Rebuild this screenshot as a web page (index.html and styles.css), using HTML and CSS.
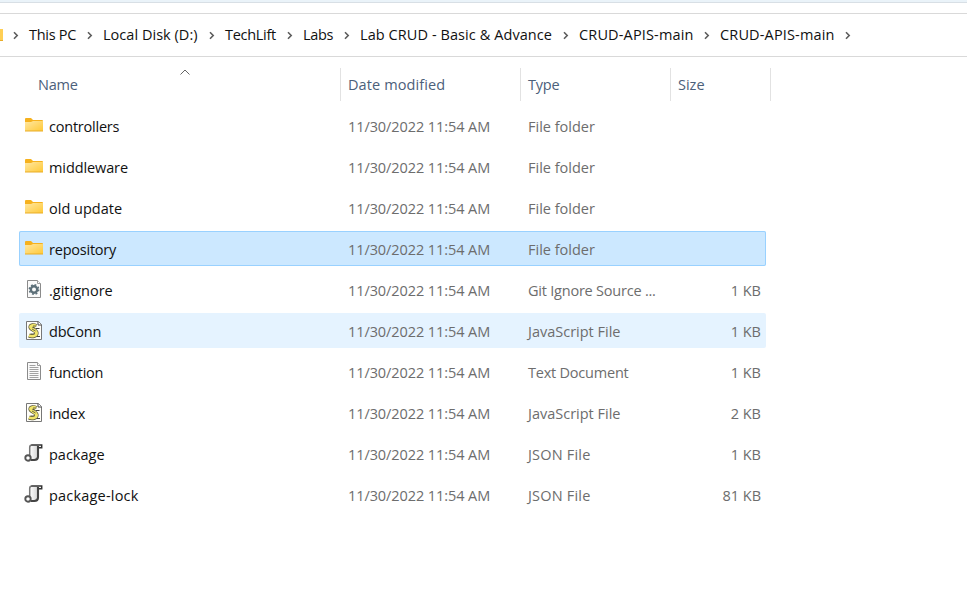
FILE: index.html
```html
<!DOCTYPE html>
<html lang="en">
<head>
<meta charset="utf-8">
<title>CRUD-APIS-main</title>
<link rel="stylesheet" href="styles.css">
</head>
<body>
<svg class="defs" width="0" height="0">
<defs>
<linearGradient id="fold" x1="0" y1="0" x2="1" y2="1"><stop offset="0" stop-color="#ffe7a2"/><stop offset="1" stop-color="#ffc937"/></linearGradient>
<linearGradient id="scroll"><stop offset="0" stop-color="#ffffff"/><stop offset="1" stop-color="#d5d5d5"/></linearGradient>
<symbol id="folder" viewBox="0 0 20 20"><path d="M1 4q0-1 1-1h5l2 2h9q1 0 1 1v3H1z" fill="#f6b11d"/><path d="M1 7h6l2-1h10v10H1z" fill="url(#fold)"/><path d="M1 15.500h18v1H1z" fill="#e9ac27"/></symbol>
<symbol id="page" viewBox="0 0 20 20"><path d="M3.500 1.500h10l3 3v14h-13z" fill="#fafafa" stroke="#8b8b8b"/><path d="M13.500 1.500v3h3" fill="#fff" stroke="#9b9b9b"/></symbol>
<symbol id="gear" viewBox="0 0 20 20"><use href="#page"/><circle cx="10" cy="10.500" r="3.200" fill="none" stroke="#5d7079" stroke-width="2.400"/><circle cx="10" cy="10.500" r="4.700" fill="none" stroke="#5d7079" stroke-width="1.500" stroke-dasharray="1.846"/></symbol>
<symbol id="text" viewBox="0 0 20 20"><use href="#page"/><path d="M5.500 4.500h6M5.500 6.500h9M5.500 8.500h9M5.500 10.500h9M5.500 12.500h9M5.500 14.500h9M5.500 16.500h9" stroke="#a2a2a2"/></symbol>
<symbol id="script" viewBox="0 0 20 20"><path d="M2.500 1.500h12l3 3v15h-15z" fill="#fffef8" stroke="#777"/><path d="M14 1.500v3.500h3.500" fill="#fff" stroke="#444"/><path d="M12 6C10 4.800 6.500 5 6.500 7.200S12.500 10 12.500 13s-4.500 3.800-7.500 2.500" fill="none" stroke="#555238" stroke-width="4.200"/><path d="M12 6C10 4.800 6.500 5 6.500 7.200S12.500 10 12.500 13s-4.500 3.800-7.500 2.500" fill="none" stroke="#f1e56a" stroke-width="2.900"/><path d="M9 6h3.500M8 9l3.500 2M7 14h3.500" stroke="#5f5c3e" stroke-width=".9"/><path d="M11.500 8.500h4M13 16.500h3" stroke="#444"/></symbol>
<symbol id="json" viewBox="0 0 20 20"><path d="M5.700 12V4.500Q5.700 2 8 2h6v12q0 3-3.500 3H5.700z" fill="url(#scroll)"/><path d="M5.700 12V4.500Q5.700 2 8 2" fill="none" stroke="#777" stroke-width="1.500"/><path d="M14 3v10.800q0 3.200-3.700 3.200H7" fill="none" stroke="#444" stroke-width="2.100"/><path d="M7.500 2h10.200v2.700h-3" fill="none" stroke="#333" stroke-width="1.500"/><circle cx="4" cy="15" r="2.700" fill="#fff" stroke="#555" stroke-width="1.900"/></symbol>
<symbol id="chev" viewBox="0 0 7 9"><path d="M2 1.300l3.200 3.200L2 7.700" fill="none" stroke="#5c5c5c" stroke-width="1.600"/></symbol>
</defs>
</svg>
<div class="strip"></div>
<nav class="path">
<span class="stub"></span>
<svg class="chev"><use href="#chev"/></svg><span class="crumb pc">This PC</span>
<svg class="chev"><use href="#chev"/></svg><span class="crumb disk">Local Disk (D:)</span>
<svg class="chev"><use href="#chev"/></svg><span class="crumb tech">TechLift</span>
<svg class="chev"><use href="#chev"/></svg><span class="crumb labs">Labs</span>
<svg class="chev"><use href="#chev"/></svg><span class="crumb lab">Lab CRUD - Basic &amp; Advance</span>
<svg class="chev"><use href="#chev"/></svg><span class="crumb api">CRUD-APIS-main</span>
<svg class="chev"><use href="#chev"/></svg><span class="crumb api">CRUD-APIS-main</span>
<svg class="chev"><use href="#chev"/></svg>
</nav>
<div class="head">
<span class="h-name">Name<svg class="sort" viewBox="0 0 10 6"><path d="M.500 5.500L5 1l4.500 4.500" fill="none" stroke="#666"/></svg></span>
<span class="h-date">Date modified</span><span class="h-type">Type</span><span class="h-size">Size</span>
</div>
<main class="list">
<div class="row"><svg class="icon"><use href="#folder"/></svg><span class="name tight">controllers</span><span class="date">11/30/2022 11:54 AM</span><span class="type">File folder</span><span class="size"></span></div>
<div class="row"><svg class="icon"><use href="#folder"/></svg><span class="name snug">middleware</span><span class="date">11/30/2022 11:54 AM</span><span class="type">File folder</span><span class="size"></span></div>
<div class="row"><svg class="icon"><use href="#folder"/></svg><span class="name">old update</span><span class="date">11/30/2022 11:54 AM</span><span class="type">File folder</span><span class="size"></span></div>
<div class="row selected"><svg class="icon"><use href="#folder"/></svg><span class="name tight">repository</span><span class="date">11/30/2022 11:54 AM</span><span class="type">File folder</span><span class="size"></span></div>
<div class="row"><svg class="icon"><use href="#gear"/></svg><span class="name">.gitignore</span><span class="date">11/30/2022 11:54 AM</span><span class="type tight">Git Ignore Source ...</span><span class="size">1 KB</span></div>
<div class="row hover"><svg class="icon"><use href="#script"/></svg><span class="name tight">dbConn</span><span class="date">11/30/2022 11:54 AM</span><span class="type">JavaScript File</span><span class="size">1 KB</span></div>
<div class="row"><svg class="icon"><use href="#text"/></svg><span class="name tight">function</span><span class="date">11/30/2022 11:54 AM</span><span class="type tight">Text Document</span><span class="size">1 KB</span></div>
<div class="row"><svg class="icon"><use href="#script"/></svg><span class="name tight">index</span><span class="date">11/30/2022 11:54 AM</span><span class="type">JavaScript File</span><span class="size">2 KB</span></div>
<div class="row"><svg class="icon"><use href="#json"/></svg><span class="name">package</span><span class="date">11/30/2022 11:54 AM</span><span class="type wide">JSON File</span><span class="size">1 KB</span></div>
<div class="row"><svg class="icon"><use href="#json"/></svg><span class="name wide">package-lock</span><span class="date">11/30/2022 11:54 AM</span><span class="type wide">JSON File</span><span class="size">81 KB</span></div>
</main>
</body>
</html>
```
FILE: styles.css
```css
* { box-sizing: border-box; }
body { margin: 0; height: 615px; overflow: hidden; background: #fff; font: 14.5px/20px "Open Sans", "Noto Sans", sans-serif; color: #111; white-space: nowrap; }
.defs { display: block; position: absolute; }
.strip { height: 3px; background: #eaf3f9; border-bottom: 1px solid #d8dfe5; }
.path { display: flex; align-items: center; height: 44px; margin-top: 10px; border: solid #d9d9d9; border-width: 1px 0; }
.stub { width: 3px; height: 12px; background: #ffcf55; border-bottom: 1px solid #e9ac27; }
.chev { flex: none; width: 7px; height: 9px; margin: 0 10px; }
.stub + .chev { margin-left: 9px; }
.crumb { flex: none; letter-spacing: -0.3px; }
.pc { width: 47px; }
.crumb.disk { width: 95px; letter-spacing: 0.03px; }
.tech { width: 51px; }
.labs { width: 30px; }
.crumb.lab { width: 192px; letter-spacing: 0.08px; }
.crumb.api { width: 114px; letter-spacing: 0.15px; }
.head { display: grid; grid-template-columns: 302px 180px 150px 101px; height: 33px; margin: 11px 0 7px 38px; line-height: 33px; color: #4c607a; }
.head > span { border-right: 1px solid #e2e2e2; padding-left: 7px; margin-left: 1px; }
.head > .h-name { position: relative; padding: 0; margin: 0; width: 303px; letter-spacing: -0.2px; }
.head > .h-date { width: 180px; letter-spacing: 0.1px; }
.head > .h-type { width: 150px; letter-spacing: -0.2px; }
.head > .h-size { width: 100px; }
.sort { position: absolute; left: 142px; top: 1px; width: 10px; height: 6px; }
.list { display: grid; gap: 6px; margin-left: 19px; width: 747px; }
.row { display: grid; grid-template-columns: 25px 299px 180px 120px 113px; height: 35px; padding: 2px 5px 0; align-items: center; border-radius: 2px; color: #6d6d6d; }
.row .name { color: #111; }
.icon { width: 20px; height: 20px; margin-top: -3px; }
.date { letter-spacing: -0.08px; }
.snug { letter-spacing: -0.1px; }
.tight { letter-spacing: -0.22px; }
.wide { letter-spacing: 0.2px; }
.size { text-align: right; }
.selected { background: #cce8ff; box-shadow: inset 0 0 0 1px #99d1ff; }
.hover { background: #e5f3ff; }
```
